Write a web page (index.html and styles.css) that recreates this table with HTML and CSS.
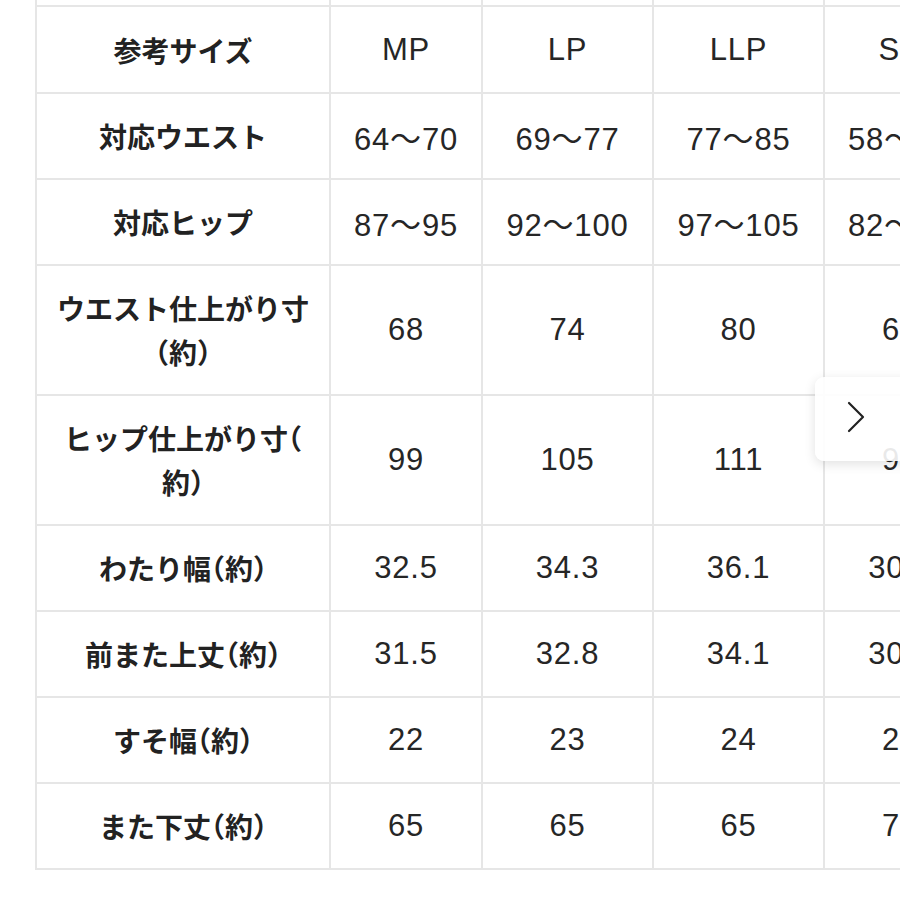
FILE: index.html
```html
<!DOCTYPE html>
<html lang="ja">
<head>
<meta charset="utf-8">
<link rel="stylesheet" href="styles.css">
</head>
<body>
<div class="viewport">
  <div class="grid">
    <div class="cell"></div><div class="cell"></div><div class="cell"></div><div class="cell"></div><div class="cell"></div>

    <div class="cell label">参考サイズ</div>
    <div class="cell num">MP</div><div class="cell num">LP</div><div class="cell num">LLP</div><div class="cell num">SP</div>

    <div class="cell label">対応ウエスト</div>
    <div class="cell num">64～70</div><div class="cell num">69～77</div><div class="cell num">77～85</div><div class="cell num">58～64</div>

    <div class="cell label">対応ヒップ</div>
    <div class="cell num">87～95</div><div class="cell num">92～100</div><div class="cell num">97～105</div><div class="cell num">82～90</div>

    <div class="cell label">ウエスト仕上がり寸<br>（約）</div>
    <div class="cell num">68</div><div class="cell num">74</div><div class="cell num">80</div><div class="cell num">62</div>

    <div class="cell label">ヒップ仕上がり寸（<br>約）</div>
    <div class="cell num">99</div><div class="cell num">105</div><div class="cell num">111</div><div class="cell num">93</div>

    <div class="cell label">わたり幅（約）</div>
    <div class="cell num">32.5</div><div class="cell num">34.3</div><div class="cell num">36.1</div><div class="cell num">30.7</div>

    <div class="cell label">前また上丈（約）</div>
    <div class="cell num">31.5</div><div class="cell num">32.8</div><div class="cell num">34.1</div><div class="cell num">30.2</div>

    <div class="cell label">すそ幅（約）</div>
    <div class="cell num">22</div><div class="cell num">23</div><div class="cell num">24</div><div class="cell num">21</div>

    <div class="cell label">また下丈（約）</div>
    <div class="cell num">65</div><div class="cell num">65</div><div class="cell num">65</div><div class="cell num">70</div>
  </div>

  <div class="next-btn">
    <svg width="20" height="32" viewBox="0 0 20 32" aria-hidden="true">
      <polyline points="3,2 17,16 3,30" fill="none" stroke="#222" stroke-width="2.2" stroke-linecap="round" stroke-linejoin="round"/>
    </svg>
  </div>
</div>
</body>
</html>
```

FILE: styles.css
```css
html, body {
  margin: 0;
  padding: 0;
  background: #ffffff;
}

.viewport {
  position: relative;
  width: 900px;
  height: 900px;
  overflow: hidden;
  background: #ffffff;
}

.grid {
  display: grid;
  grid-template-columns: 292px 150px 169px 169px 150px;
  grid-template-rows: 84px 85px 84px 84px 128px 128px 84px 84px 84px 84px;
  gap: 2px;
  padding: 2px;
  background: #e6e6e6;
  width: max-content;
  margin-left: 35px;
  margin-top: -81px;
}

.cell {
  background: #ffffff;
  display: flex;
  align-items: center;
  justify-content: center;
  text-align: center;
  color: #222222;
}

.label {
  font-family: "Noto Sans CJK JP", sans-serif;
  font-weight: 700;
  font-size: 28px;
  line-height: 44px;
  font-feature-settings: "halt" 1;
}

.num {
  font-family: "Liberation Sans", "Noto Sans CJK JP", sans-serif;
  font-weight: 400;
  font-size: 31px;
  letter-spacing: 0.8px;
  color: #262626;
}

.next-btn {
  position: absolute;
  left: 815px;
  top: 377px;
  width: 110px;
  height: 84px;
  border-radius: 9px;
  background: rgba(255, 255, 255, 0.9);
  box-shadow: 0 3px 12px rgba(0, 0, 0, 0.12);
  display: flex;
  align-items: center;
  padding-left: 31px;
  box-sizing: border-box;
}

.next-btn svg {
  margin-top: -4px;
}
```
